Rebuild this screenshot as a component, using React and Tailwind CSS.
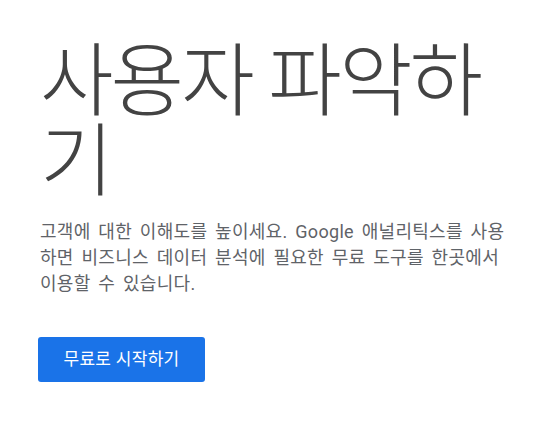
import React from 'react';

export default function App() {
  return (
    <div className="min-h-screen bg-white font-['Roboto','Noto_Sans_CJK_KR',sans-serif]">
      <div className="pl-10 pt-[42px] w-[515px]">
        <h1 className="text-[80px] leading-[80px] font-light text-[#434343] tracking-[-3px]">
          사용자 파악하기
        </h1>
        <p className="mt-[17px] text-[18px] leading-[26px] text-[#5f6368] tracking-[0.3px] [word-spacing:3px] break-all">
          고객에 대한 이해도를 높이세요. Google 애널리틱스를 사용하면 비즈니스 데이터 분석에 필요한 무료 도구를 한곳에서 이용할 수 있습니다.
        </p>
        <button className="mt-[40px] -ml-0.5 w-[167px] h-[45px] rounded-[3px] bg-[#1a73e8] text-white text-[17px] tracking-[0.3px]">
          무료로 시작하기
        </button>
      </div>
    </div>
  );
}
